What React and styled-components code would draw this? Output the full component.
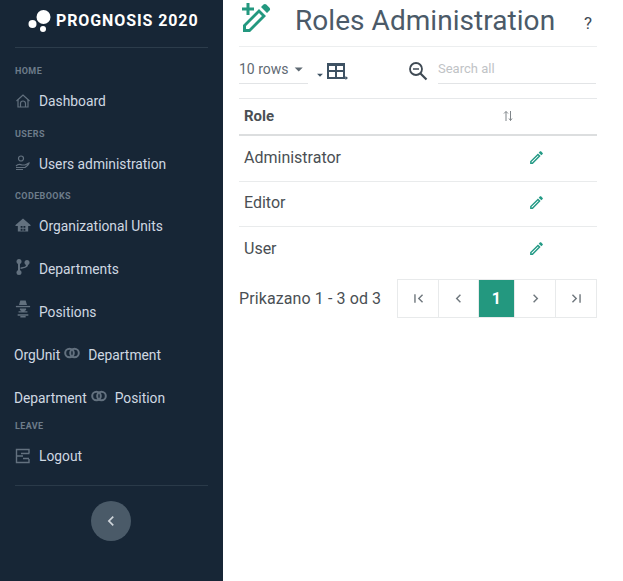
import React from "react";
import styled, { createGlobalStyle } from "styled-components";
import {
  MdChevronLeft,
  MdChevronRight,
  MdFirstPage,
  MdLastPage,
  MdOutlineEdit,
  MdArrowDropDown,
} from "react-icons/md";

const GlobalStyle = createGlobalStyle`
  html, body {
    margin: 0;
    padding: 0;
    background: #fff;
    font-family: Roboto, "Liberation Sans", sans-serif;
  }
`;

const Page = styled.div`
  display: flex;
  width: 623px;
  height: 581px;
  overflow: hidden;
`;

const Sidebar = styled.aside`
  width: 223px;
  flex: none;
  background: #172636;
  display: flex;
  flex-direction: column;
  box-sizing: border-box;
  padding: 0 15px;
`;

const Brand = styled.div`
  height: 48px;
  display: flex;
  align-items: center;
  padding: 0 0 6px 13px;
  box-sizing: border-box;
  gap: 2px;
  border-bottom: 1px solid #2c3c4b;
  color: #fff;
  font-size: 16px;
  font-weight: 700;
  letter-spacing: 0.9px;
  white-space: nowrap;
`;

const SectionLabel = styled.div`
  height: 11px;
  line-height: 11px;
  font-size: 9px;
  font-weight: 700;
  letter-spacing: 0.4px;
  color: #6d7c8a;
  margin-top: ${(props) => props.$top || 0}px;
`;

const NavRow = styled.div`
  height: ${(props) => props.$height || 43}px;
  box-sizing: border-box;
  padding-top: ${(props) => props.$shift || 0}px;
  display: flex;
  align-items: center;
  color: #cfd8e2;
  font-size: 13.8px;
  gap: ${(props) => (props.$pair ? 0 : 8)}px;
  margin-left: ${(props) => (props.$pair ? -1 : 0)}px;
`;

const NavIcon = styled.span`
  width: 16px;
  height: 16px;
  display: flex;
  align-items: center;
  justify-content: center;
  color: #63717f;
  flex: none;
  margin-top: ${(props) => props.$lift || -1}px;
`;

const PairIcon = styled.span`
  display: flex;
  color: #63717f;
  margin: -4px 8px 0 4px;
`;

const NavDivider = styled.div`
  height: 1px;
  background: #2a3a49;
  margin-top: 5px;
`;

const CollapseButton = styled.button`
  width: 40px;
  height: 40px;
  border-radius: 50%;
  border: none;
  padding: 0;
  background: #4a5a68;
  color: #cfd5da;
  display: flex;
  align-items: center;
  justify-content: center;
  align-self: center;
  margin: 15px 1px 0 0;
`;

const Main = styled.main`
  width: 358px;
  margin-left: 16px;
  flex: none;
  color: #3f4a54;
`;

const Header = styled.header`
  height: 47px;
  box-sizing: border-box;
  border-bottom: 1px solid #eceeef;
  display: flex;
  align-items: flex-start;
`;

const HeaderIcon = styled.span`
  display: flex;
  flex: none;
  margin: 2px 0 0 2px;
`;

const Title = styled.h1`
  margin: 3px 0 0 22px;
  font-size: 28px;
  line-height: 36px;
  font-weight: 400;
  letter-spacing: 0.05px;
  color: #4b5a68;
  flex: 1;
  white-space: nowrap;
`;

const Help = styled.span`
  font-size: 17px;
  margin: 13px 5px 0 0;
  color: #3f4a54;
`;

const Toolbar = styled.div`
  height: 52px;
  box-sizing: border-box;
  border-bottom: 1px solid #e6e8ea;
  display: flex;
  align-items: flex-start;
`;

const RowsSelect = styled.div`
  width: 69px;
  height: 37px;
  flex: none;
  box-sizing: border-box;
  border-bottom: 1px solid #e2e4e6;
  display: flex;
  align-items: center;
  font-size: 14px;
  color: #5f6a73;
  padding-top: 8px;
  white-space: nowrap;
`;

const Columns = styled.div`
  display: flex;
  align-items: center;
  height: 37px;
  padding: 11px 0 0 5px;
  box-sizing: border-box;
  color: #3e5263;
`;

const ColumnsCaret = styled.span`
  display: flex;
  margin-top: 7px;
`;

const SearchIcon = styled.span`
  display: flex;
  margin: 14px 0 0 60px;
  color: #3f4a54;
`;

const SearchField = styled.div`
  margin-left: 10px;
  width: 158px;
  height: 37px;
  box-sizing: border-box;
  border-bottom: 1px solid #e2e4e6;
  font-size: 13px;
  color: #bfc3c6;
  padding-top: 14px;
`;

const Row = styled.div`
  display: flex;
  align-items: center;
  justify-content: space-between;
  box-sizing: border-box;
  height: ${(props) => props.$height}px;
  padding: 0 52px 2px 5px;
  border-bottom: ${(props) =>
    props.$head ? "2px solid #dcdedf" : props.$last ? "none" : "1px solid #e9ebec"};
  font-size: ${(props) => (props.$head ? 15 : 16)}px;
  font-weight: ${(props) => (props.$head ? 700 : 400)};
  color: #4a4f54;
`;

const SortIcon = styled.span`
  display: flex;
  margin-right: 31px;
  color: #7f8589;
`;

const EditIcon = styled.span`
  display: flex;
  color: #239a85;
`;

const Footer = styled.div`
  display: flex;
  align-items: center;
  justify-content: space-between;
  margin-top: 7px;
  font-size: 16px;
  letter-spacing: 0.1px;
  color: #4a4f54;
`;

const Pager = styled.div`
  display: flex;
  height: 39px;
  box-sizing: border-box;
  border: 1px solid #e8eaeb;
`;

const PageCell = styled.div`
  width: ${(props) => props.$width}px;
  box-sizing: border-box;
  display: flex;
  align-items: center;
  justify-content: center;
  background: ${(props) => (props.$active ? "#23987f" : "#fff")};
  color: ${(props) => (props.$active ? "#fff" : "#70787e")};
  font-weight: 700;
  font-size: 16px;
  border-right: ${(props) => (props.$last ? "none" : "1px solid #e8eaeb")};
`;

function Logo() {
  return (
    <svg width="26" height="24" viewBox="0 0 26 24" fill="#fff">
      <circle cx="15.5" cy="8" r="7" />
      <circle cx="4.500" cy="15" r="4" />
      <circle cx="15" cy="20" r="3" />
    </svg>
  );
}

function PencilPlus() {
  return (
    <svg width="32" height="33" viewBox="0 0 32 33" fill="none">
      <path
        d="M2 30v-7L18 7l7 7-16 16z M5 27h3L21 14l-3-3L5 24z"
        fill="#23987f"
        fillRule="evenodd"
      />
      <path d="M20 5l2.500-2.500c.8-.8 2-.8 2.800 0l3.200 3.200c.8.8.8 2 0 2.800L26 11z" fill="#23987f" />
      <path d="M7 1v12M1 7h12" stroke="#23987f" strokeWidth="3" />
    </svg>
  );
}

function HomeArch() {
  return (
    <svg width="16" height="16" viewBox="0 0 16 16" fill="none" stroke="currentColor" strokeWidth="1.200">
      <path d="M1.500 8L8 2l6.500 6" />
      <path d="M3 7v7h10V7" />
      <path d="M5.500 14v-3.500a2.500 2.500 0 015 0V14" />
    </svg>
  );
}

function UserHand() {
  return (
    <svg width="16" height="16" viewBox="0 0 16 16" fill="none" stroke="currentColor" strokeWidth="1.200">
      <circle cx="6" cy="3.500" r="2.500" />
      <path d="M1 11c2-2 4-2 6-1h3l4-2c0 1.500-2 3-4 4.500H1M1 14.500h7" />
    </svg>
  );
}

function HomeBlock() {
  return (
    <svg width="17" height="16" viewBox="0 0 17 16" fill="currentColor">
      <path d="M8.500 1L16.500 8v1H14v6H3V9H.5V8zM6 9v2h2V9zm3 0v2h2V9zm-3 3v2h2v-2zm3 0v2h2v-2z" fillRule="evenodd" />
    </svg>
  );
}

function Branch() {
  return (
    <svg width="16" height="18" viewBox="0 0 16 18" fill="currentColor">
      <circle cx="4" cy="3.500" r="2.500" />
      <circle cx="4" cy="14.500" r="2.500" />
      <circle cx="12" cy="4.500" r="2.500" />
      <path d="M3 4h2v10H3z" />
      <path d="M11 6h2v1c0 2.500-3 3-7.500 4V9.500C9 9 11 8.500 11 7z" />
    </svg>
  );
}

function PersonDesk() {
  return (
    <svg width="18" height="20" viewBox="0 0 18 20" fill="currentColor">
      <path d="M6 .5h6l1.500 5h-9z" />
      <path d="M1 6.500h16V8H1z" />
      <path d="M5.500 9.500h7V11l-2 1.500H14V14H4v-1.500h3.500L5.500 11z" />
      <path d="M3 16h12v1.500H3zM6 18h6v1.500H6z" />
    </svg>
  );
}

function Rings() {
  return (
    <svg width="16" height="12" viewBox="0 0 16 12" fill="none" stroke="currentColor" strokeWidth="2">
      <circle cx="5.500" cy="6" r="4.300" />
      <circle cx="10.500" cy="6" r="4.300" />
    </svg>
  );
}

function ExitBox() {
  return (
    <svg width="16" height="16" viewBox="0 0 16 16" fill="none" stroke="currentColor" strokeWidth="1.400">
      <path d="M14 5V1.500H1.500v13H14V11" />
      <path d="M1.500 8H8M6 5.500h8.500M8 10.500h6" />
    </svg>
  );
}

function ColumnsIcon() {
  return (
    <svg width="21" height="18" viewBox="0 0 21 18" fill="none" stroke="currentColor" strokeWidth="2">
      <path d="M1 2h16v14H1zM1 9h16M9 2v14" />
      <path d="M1 2.500h16" strokeWidth="3" />
      <path d="M16 16h3" strokeWidth="1.200" />
      <path d="M18.500 14v4l2.500-2z" fill="currentColor" strokeWidth="0" />
    </svg>
  );
}

function Magnifier() {
  return (
    <svg width="20" height="20" viewBox="0 0 20 20" fill="none" stroke="currentColor" strokeWidth="1.800">
      <circle cx="8" cy="8" r="6" />
      <path d="M12.500 12.500l6 6" strokeWidth="2.200" />
      <path d="M5 8h6" strokeWidth="1.500" />
    </svg>
  );
}

function Sort() {
  return (
    <svg width="12" height="12" viewBox="0 0 12 12" fill="none" stroke="currentColor" strokeWidth="1">
      <path d="M4 11V1.500M2 3.500l2-2 2 2" />
      <path d="M8.500 1v9.500M7 8.500l1.500 2 1.500-2" />
    </svg>
  );
}

const roles = ["Administrator", "Editor", "User"];

export default function App() {
  return (
    <Page>
      <GlobalStyle />
      <Sidebar>
        <Brand>
          <Logo />
          PROGNOSIS 2020
        </Brand>
        <SectionLabel $top={18}>HOME</SectionLabel>
        <NavRow $height={48}>
          <NavIcon><HomeArch /></NavIcon>
          Dashboard
        </NavRow>
        <SectionLabel $top={4}>USERS</SectionLabel>
        <NavRow $height={47}>
          <NavIcon><UserHand /></NavIcon>
          Users administration
        </NavRow>
        <SectionLabel $top={4}>CODEBOOKS</SectionLabel>
        <NavRow $height={45} $shift={2}>
          <NavIcon><HomeBlock /></NavIcon>
          Organizational Units
        </NavRow>
        <NavRow>
          <NavIcon $lift={-3}><Branch /></NavIcon>
          Departments
        </NavRow>
        <NavRow>
          <NavIcon $lift={-5}><PersonDesk /></NavIcon>
          Positions
        </NavRow>
        <NavRow $pair>
          OrgUnit
          <PairIcon><Rings /></PairIcon>
          Department
        </NavRow>
        <NavRow $pair>
          Department
          <PairIcon><Rings /></PairIcon>
          Position
        </NavRow>
        <SectionLabel $top={2}>LEAVE</SectionLabel>
        <NavRow $height={48}>
          <NavIcon><ExitBox /></NavIcon>
          Logout
        </NavRow>
        <NavDivider />
        <CollapseButton><MdChevronLeft size={20} /></CollapseButton>
      </Sidebar>
      <Main>
        <Header>
          <HeaderIcon><PencilPlus /></HeaderIcon>
          <Title>Roles Administration</Title>
          <Help>?</Help>
        </Header>
        <Toolbar>
          <RowsSelect>
            10 rows
            <MdArrowDropDown size={20} />
          </RowsSelect>
          <Columns>
            <ColumnsCaret><MdArrowDropDown size={14} /></ColumnsCaret>
            <ColumnsIcon />
          </Columns>
          <SearchIcon><Magnifier /></SearchIcon>
          <SearchField>Search all</SearchField>
        </Toolbar>
        <Row $head $height={37}>
          Role
          <SortIcon><Sort /></SortIcon>
        </Row>
        {roles.map((role, i) => (
          <Row key={role} $height={i === 2 ? 45 : 45.5} $last={i === 2}>
            {role}
            <EditIcon><MdOutlineEdit size={17} /></EditIcon>
          </Row>
        ))}
        <Footer>
          Prikazano 1 - 3 od 3
          <Pager>
            <PageCell $width={41}><MdFirstPage size={17} /></PageCell>
            <PageCell $width={40}><MdChevronLeft size={17} /></PageCell>
            <PageCell $width={36} $active>1</PageCell>
            <PageCell $width={41}><MdChevronRight size={17} /></PageCell>
            <PageCell $width={40} $last><MdLastPage size={17} /></PageCell>
          </Pager>
        </Footer>
      </Main>
    </Page>
  );
}
